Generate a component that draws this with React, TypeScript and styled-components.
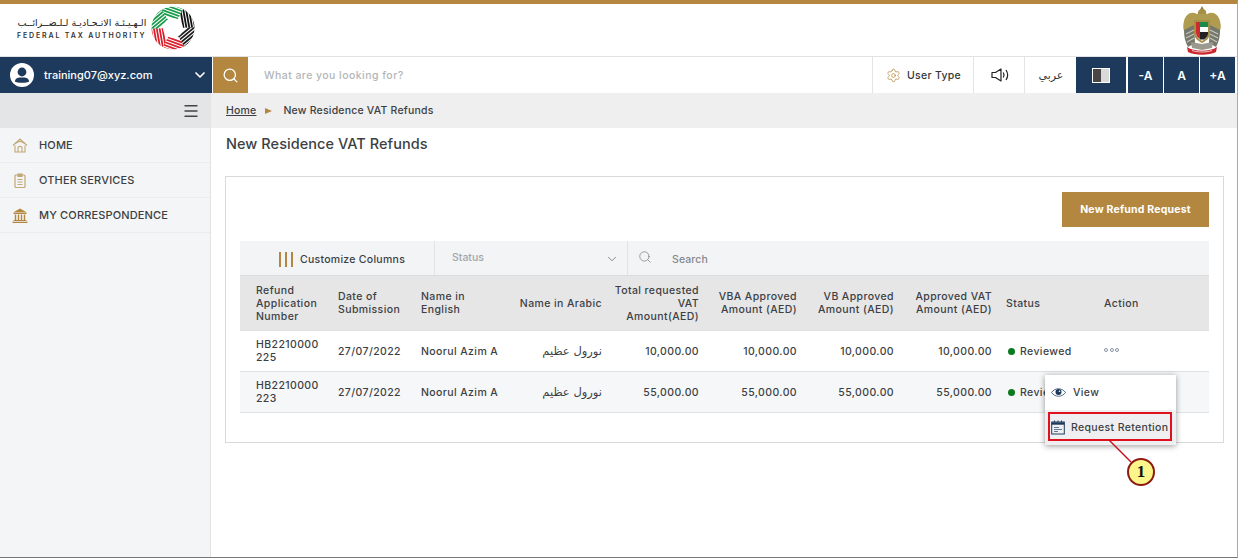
import { createGlobalStyle } from 'styled-components';
import styled from 'styled-components';
import { ChevronDown, Search, Menu, Settings } from 'lucide-react';

const GlobalStyle = createGlobalStyle`
  html, body { margin: 0; padding: 0; background: #fff; }
  body { font-family: 'Inter', 'DejaVu Sans', sans-serif; color: #3c3f44; }
  * { box-sizing: border-box; }
`;

const navy = '#1d3a5c';
const gold = '#b3873f';
const tan = '#c2a878';
const columns = '91px 83px 98px 97px 97px 98px 97px 98px 98px 1fr';

const Page = styled.div`
  position: relative;
  width: 1238px;
  height: 558px;
  overflow: hidden;
  border-bottom: 1px solid #777;
  border-right: 1px solid #aaa;
  border-top: 4px solid ${gold};
`;

const Header = styled.div`
  height: 52px;
  display: flex;
  align-items: center;
  justify-content: space-between;
  padding: 0 16px 0 17px;
`;

const Brand = styled.div`
  display: flex;
  align-items: center;
  gap: 5px;
  margin-top: -4px;
`;

const BrandText = styled.div`
  display: flex;
  flex-direction: column;
  align-items: flex-end;
  gap: 2px;
  margin-top: 1px;
`;

const BrandArabic = styled.div`
  font-family: 'DejaVu Sans', sans-serif;
  font-size: 9.5px;
  line-height: 12px;
  color: #222;
  direction: rtl;
  white-space: nowrap;
`;

const BrandLatin = styled.div`
  font-size: 7px;
  line-height: 9px;
  font-weight: 600;
  letter-spacing: 1.85px;
  color: #333;
`;

const NavBar = styled.div`
  height: 37px;
  display: flex;
  border-top: 1px solid #e2e2e2;
  padding-right: 2px;
`;

const Account = styled.div`
  width: 212px;
  background: ${navy};
  color: #fff;
  display: flex;
  align-items: center;
  padding: 0 4px 0 10px;
  font-size: 11px;
  font-weight: 500;
`;

const AccountName = styled.span`
  flex: 1;
  margin-left: 10px;
`;

const SearchButton = styled.div`
  width: 35px;
  margin-left: 1px;
  background: ${gold};
  color: #fff;
  display: flex;
  align-items: center;
  justify-content: center;
`;

const SearchHint = styled.div`
  flex: 1;
  display: flex;
  align-items: center;
  padding-left: 16px;
  font-size: 10.5px;
  font-weight: 500;
  letter-spacing: 0.45px;
  color: #b4b6b8;
`;

const NavItem = styled.div<{ $w: number }>`
  width: ${(p) => p.$w}px;
  display: flex;
  align-items: center;
  justify-content: center;
  gap: 6px;
  padding-left: 1px;
  border-left: 1px solid #e4e4e4;
  font-size: 10.5px;
  font-weight: 500;
  letter-spacing: 0.3px;
  color: #33363a;
`;

const ArabicLabel = styled.span`
  font-family: 'DejaVu Sans', sans-serif;
  font-size: 11px;
`;

const NavDark = styled.div<{ $w: number; $gap: number }>`
  width: ${(p) => p.$w}px;
  margin-right: ${(p) => p.$gap}px;
  background: ${navy};
  color: #fff;
  display: flex;
  align-items: center;
  justify-content: center;
  font-size: 12px;
  font-weight: 600;
`;

const ContrastIcon = styled.div`
  width: 18px;
  height: 15px;
  border: 1px solid #fff;
  background: linear-gradient(90deg, #4a4648 50%, #d9d9d9 50%);
`;

const Body = styled.div`
  display: flex;
  height: 464px;
`;

const Sidebar = styled.div`
  width: 211px;
  flex: none;
  background: #f4f5f6;
  border-right: 1px solid #e2e3e4;
`;

const SideTop = styled.div`
  height: 35px;
  background: #e4e5e6;
  display: flex;
  align-items: center;
  justify-content: flex-end;
  padding-right: 10px;
  color: #444;
`;

const SideItem = styled.div`
  height: 35px;
  display: flex;
  align-items: center;
  gap: 11px;
  padding-left: 12px;
  border-bottom: 1px solid #ececee;
  font-size: 11px;
  font-weight: 500;
  letter-spacing: 0.15px;
  color: #3c3f44;
  svg { flex: none; }
`;

const Main = styled.div`
  flex: 1;
  min-width: 0;
`;

const Crumbs = styled.div`
  height: 35px;
  background: #efefef;
  display: flex;
  align-items: center;
  gap: 9px;
  padding-left: 15px;
  font-size: 10.5px;
  font-weight: 500;
  letter-spacing: 0.2px;
`;

const CrumbLink = styled.span`
  text-decoration: underline;
`;

const CrumbArrow = styled.span`
  width: 0;
  height: 0;
  margin-right: 2px;
  border-left: 7px solid ${gold};
  border-top: 3.5px solid transparent;
  border-bottom: 3.5px solid transparent;
`;

const Title = styled.h1`
  margin: 0;
  padding: 7px 0 0 15px;
  height: 48px;
  font-size: 14.5px;
  line-height: 18px;
  font-weight: 500;
  letter-spacing: 0.05px;
  color: #3c3f44;
`;

const Card = styled.div`
  width: 999px;
  height: 267px;
  margin-left: 14px;
  border: 1px solid #d9d9d9;
  padding: 15px 14px 0;
`;

const CardActions = styled.div`
  display: flex;
  justify-content: flex-end;
  height: 49px;
`;

const PrimaryButton = styled.div`
  width: 147px;
  height: 35px;
  background: ${gold};
  color: #fff;
  display: flex;
  align-items: center;
  justify-content: center;
  font-size: 10.5px;
  font-weight: 700;
  letter-spacing: 0.2px;
`;

const Toolbar = styled.div`
  height: 35px;
  display: flex;
  background: #f3f4f6;
  border-bottom: 1px solid #dcdcdc;
`;

const CustomizeButton = styled.div`
  width: 195px;
  display: flex;
  align-items: center;
  justify-content: center;
  gap: 7px;
  padding: 2px 0 0 10px;
  font-size: 10.5px;
  font-weight: 500;
  letter-spacing: 0.28px;
  border-right: 1px solid #e2e3e5;
`;

const ColumnsIcon = styled.span`
  display: flex;
  gap: 4px;
  i {
    display: block;
    width: 2px;
    height: 15px;
    background: ${gold};
  }
`;

const StatusSelect = styled.div`
  width: 193px;
  display: flex;
  align-items: center;
  justify-content: space-between;
  padding: 0 8px 0 17px;
  font-size: 10.5px;
  font-weight: 500;
  color: #a2a5a9;
  border-right: 1px solid #e2e3e5;
  svg { color: #666; margin-top: 2px; }
  span { margin-top: -2px; }
`;

const SearchBox = styled.div`
  display: flex;
  align-items: center;
  gap: 20px;
  padding-left: 10px;
  font-size: 10.5px;
  font-weight: 500;
  letter-spacing: 0.1px;
  color: #85888c;
  svg { color: #777; margin-top: -3px; }
  span { margin-top: 3px; }
`;

const HeadRow = styled.div`
  display: grid;
  grid-template-columns: ${columns};
  height: 55px;
  background: #e6e6e7;
  border-bottom: 1px solid #dfe0e1;
`;

const DataRow = styled.div<{ $alt?: boolean }>`
  display: grid;
  grid-template-columns: ${columns};
  height: 41px;
  background: ${(p) => (p.$alt ? '#f6f7f8' : '#fff')};
  border-bottom: 1px solid #e0e1e3;
`;

const Cell = styled.div<{ $right?: boolean; $first?: boolean }>`
  display: flex;
  align-items: center;
  justify-content: ${(p) => (p.$right ? 'flex-end' : 'flex-start')};
  text-align: ${(p) => (p.$right ? 'right' : 'left')};
  padding: 0 7px 0 ${(p) => (p.$first ? '16px' : p.$right ? '0' : '7px')};
  font-size: 10.5px;
  line-height: 13px;
  font-weight: 500;
  letter-spacing: 0.4px;
  color: #3c3f44;
`;

const ArabicName = styled.span`
  font-family: 'DejaVu Sans', sans-serif;
  font-size: 11.5px;
  letter-spacing: 0;
  direction: rtl;
`;

const StatusDot = styled.span`
  width: 7px;
  height: 7px;
  border-radius: 50%;
  background: #0b7a1e;
  margin: 0 5px 0 2px;
  flex: none;
`;

const Dots = styled.span`
  display: flex;
  gap: 1.5px;
  margin-top: -3px;
  i {
    display: block;
    width: 4px;
    height: 4px;
    border-radius: 50%;
    border: 1px solid #8a94a6;
  }
`;

const ActionMenu = styled.div`
  position: absolute;
  left: 1045px;
  top: 371px;
  width: 131px;
  height: 70px;
  background: #fff;
  box-shadow: 0 1px 6px rgba(0, 0, 0, 0.4);
`;

const MenuItem = styled.div<{ $active?: boolean }>`
  height: 35px;
  display: flex;
  align-items: center;
  gap: ${(p) => (p.$active ? 6 : 7)}px;
  padding-left: 6px;
  background: ${(p) => (p.$active ? '#efeff1' : '#fff')};
  font-size: 10.5px;
  font-weight: 500;
  letter-spacing: 0.35px;
  white-space: nowrap;
  color: #3c3f44;
  svg { flex: none; }
`;

const Highlight = styled.div`
  position: absolute;
  left: 1048px;
  top: 408px;
  width: 124px;
  height: 29px;
  border: 2px solid #e0101f;
`;

const Leader = styled.svg`
  position: absolute;
  left: 1100px;
  top: 432px;
`;

const Badge = styled.div`
  position: absolute;
  left: 1127px;
  top: 454px;
  width: 28px;
  height: 28px;
  border-radius: 50%;
  background: #fbf58a;
  border: 2px solid #8c1c13;
  color: #111;
  display: flex;
  align-items: center;
  justify-content: center;
  font-family: 'Liberation Serif', serif;
  font-size: 17px;
  font-weight: 700;
`;

const FtaMark = () => {
  const bands = [
    { rot: 0, color: '#1a9a4b' },
    { rot: 60, color: '#111' },
    { rot: 120, color: '#1c1c1c' },
    { rot: 180, color: '#d9202c' },
    { rot: 240, color: '#d9202c' },
    { rot: 300, color: '#1a9a4b' },
  ];
  return (
    <svg width="44" height="44" viewBox="-22 -22 44 44">
      <defs>
        <clipPath id="fta-wedge">
          <path d="M0 0 L-15 -24 L13 -24z" />
        </clipPath>
        <clipPath id="fta-ring">
          <circle r="21.5" />
        </clipPath>
      </defs>
      <g clipPath="url(#fta-ring)">
        {bands.map((b) => (
          <g key={b.rot} transform={`rotate(${b.rot})`}>
            <g clipPath="url(#fta-wedge)" stroke={b.color} strokeWidth="1.8" fill="none">
              <path d="M-16 -17 L14 -6" />
              <path d="M-16 -20 L14 -9" />
              <path d="M-16 -23 L14 -12" />
              <path d="M-16 -26 L14 -15" />
              <path d="M-16 -29 L14 -18" />
              <path d="M-16 -32 L14 -21" />
            </g>
          </g>
        ))}
      </g>
      <circle r="10" fill="#fff" />
    </svg>
  );
};

const Emblem = () => (
  <svg width="38" height="49" viewBox="0 0 38 49">
    <path d="M19 0 l2 4 -4 0z" fill="#8a7a3c" />
    <path d="M15 9 C14 5 17 3 19 3 C22 3 24 5 23 9z" fill="#a58f45" />
    <path d="M14 8 C8 5 3 8 1 15 C0 19 0 22 1 25 L12 20 L19 14 L26 20 L37 25 C38 22 38 19 37 15 C35 8 30 5 24 8z" fill="#b09c50" />
    <path d="M1 24 L11 19 L12 37 L5 41 C2 36 1 30 1 24z" fill="#75786c" />
    <path d="M37 24 L27 19 L26 37 L33 41 C36 36 37 30 37 24z" fill="#75786c" />
    <path d="M3 28 L11 24 M3 32 L11 28 M4 36 L11 32 M35 28 L27 24 M35 32 L27 28 M34 36 L27 32" stroke="#c9c9bc" strokeWidth="1.1" />
    <path d="M11 14 h16 v13 c0 5 -4 8 -8 10 c-4 -2 -8 -5 -8 -10z" fill="#a58f45" />
    <path d="M13 16 h12 v11 c0 4 -3 6 -6 8 c-3 -2 -6 -4 -6 -8z" fill="#fff" />
    <path d="M13 16 h4 v17 c-2 -1 -4 -3 -4 -6z" fill="#cf2a2e" />
    <path d="M17 16 h8 v5 h-8z" fill="#1a8a4b" />
    <path d="M17 26 h8 v2 c0 2 -2 4 -4 5.5 h-4z" fill="#222" />
    <path d="M8 36 L19 38 L30 36 L29 42 L19 44 L9 42z" fill="#9a9a8e" />
    <path d="M4 41 C11 46 27 46 34 41 L33 46 C26 49.5 12 49.5 5 46z" fill="#c9262e" />
    <path d="M9 44.5 C15 46.5 23 46.5 29 44.5" stroke="#f0d8d0" strokeWidth="0.9" fill="none" />
  </svg>
);

const AccountIcon = () => (
  <svg width="24" height="24" viewBox="0 0 24 24">
    <circle cx="12" cy="12" r="12" fill="#fff" />
    <circle cx="12" cy="9" r="4.4" fill={navy} />
    <path d="M4.8 18.5 C5.5 14.8 8.5 14.5 12 14.5 C15.5 14.5 18.5 14.8 19.2 18.5 C17 20.2 7 20.2 4.8 18.5z" fill={navy} />
  </svg>
);

const SpeakerIcon = () => (
  <svg width="18" height="14" viewBox="0 0 18 14" fill="none" stroke="#222" strokeWidth="1.2">
    <path d="M1 4.5 H4.5 L10 1 V13 L4.5 9.5 H1z" strokeLinejoin="round" />
    <path d="M12.3 4.5 C13.2 6 13.2 8 12.3 9.5" />
    <path d="M15 2 C17 5 17 9 15 12" />
  </svg>
);

const HomeIcon = () => (
  <svg width="16" height="15" viewBox="0 0 16 15" fill="none" stroke={tan} strokeWidth="1.1">
    <path d="M1 7.5 L8 1 L15 7.5" />
    <path d="M3 5.5 L8 3.2 L13 5.5" />
    <path d="M3 7.5 V14 H13 V7.5" />
    <path d="M6 14 V9.5 C6 8 10 8 10 9.5 V14" />
  </svg>
);

const ClipboardIcon = () => (
  <svg width="16" height="15" viewBox="0 0 16 15" fill="none" stroke={tan} strokeWidth="1.2">
    <rect x="3" y="2" width="10" height="12.5" rx="1" />
    <path d="M6 1 H10 V3.5 H6z" fill={tan} />
    <path d="M5.5 6.5 H10.5 M5.5 9 H10.5 M5.5 11.5 H10.5" />
  </svg>
);

const BankIcon = () => (
  <svg width="16" height="15" viewBox="0 0 16 15" fill="none">
    <path d="M8 0.5 L15 4.5 H1z" fill={gold} />
    <path d="M1.5 5.5 H14.5" stroke={gold} strokeWidth="1" />
    <path d="M3.5 6.5 V12 M6.5 6.5 V12 M9.5 6.5 V12 M12.5 6.5 V12" stroke={gold} strokeWidth="1.4" />
    <path d="M1.5 12.5 H14.5 M0.5 14.3 H15.5" stroke={gold} strokeWidth="1.2" />
  </svg>
);

const EyeIcon = () => (
  <svg width="15" height="11" viewBox="0 0 15 11" fill="none">
    <path d="M0.5 5.5 C4 0.5 11 0.5 14.5 5.5 C11 10.5 4 10.5 0.5 5.5z" stroke="#4d6a88" strokeWidth="1" />
    <circle cx="7.5" cy="5" r="3" fill={navy} />
    <circle cx="8.5" cy="4.2" r="0.8" fill="#fff" />
  </svg>
);

const RetentionIcon = () => (
  <svg width="14" height="15" viewBox="0 0 14 15" fill="none" stroke={navy}>
    <rect x="0.7" y="2" width="12.6" height="12" strokeWidth="1" />
    <path d="M0.7 3.5 H13.3" strokeWidth="2.4" />
    <path d="M3.5 0.5 V2 M7 0.5 V2 M10.5 0.5 V2" strokeWidth="1" />
    <path d="M3 7.5 H8 M3 9.5 H11 M3 11.5 H7" strokeWidth="0.9" stroke="#4d6a88" />
  </svg>
);

const headers = [
  'Refund Application Number',
  'Date of Submission',
  'Name in English',
  'Name in Arabic',
  'Total requested VAT Amount(AED)',
  'VBA Approved Amount (AED)',
  'VB Approved Amount (AED)',
  'Approved VAT Amount (AED)',
  'Status',
  'Action',
];

const rows = [
  { id: 'HB2210000 225', amount: '10,000.00', alt: false },
  { id: 'HB2210000 223', amount: '55,000.00', alt: true },
];

const App = () => (
  <Page>
    <GlobalStyle />
    <Header>
      <Brand>
        <BrandText>
          <BrandArabic>الـهـيـئـة الاتـحـاديـة لـلـضــرائــب</BrandArabic>
          <BrandLatin>FEDERAL TAX AUTHORITY</BrandLatin>
        </BrandText>
        <FtaMark />
      </Brand>
      <Emblem />
    </Header>
    <NavBar>
      <Account>
        <AccountIcon />
        <AccountName>training07@xyz.com</AccountName>
        <ChevronDown size={16} strokeWidth={2.5} />
      </Account>
      <SearchButton>
        <Search size={17} strokeWidth={1.8} />
      </SearchButton>
      <SearchHint>What are you looking for?</SearchHint>
      <NavItem $w={101}>
        <Settings size={15} strokeWidth={1.2} color={gold} />
        User Type
      </NavItem>
      <NavItem $w={51}>
        <SpeakerIcon />
      </NavItem>
      <NavItem $w={52}>
        <ArabicLabel>عربي</ArabicLabel>
      </NavItem>
      <NavDark $w={50} $gap={2}>
        <ContrastIcon />
      </NavDark>
      <NavDark $w={35} $gap={1}>-A</NavDark>
      <NavDark $w={35} $gap={1}>A</NavDark>
      <NavDark $w={35} $gap={0}>+A</NavDark>
    </NavBar>
    <Body>
      <Sidebar>
        <SideTop>
          <Menu size={18} strokeWidth={1.8} />
        </SideTop>
        <SideItem>
          <HomeIcon />
          HOME
        </SideItem>
        <SideItem>
          <ClipboardIcon />
          OTHER SERVICES
        </SideItem>
        <SideItem>
          <BankIcon />
          MY CORRESPONDENCE
        </SideItem>
      </Sidebar>
      <Main>
        <Crumbs>
          <CrumbLink>Home</CrumbLink>
          <CrumbArrow />
          <span>New Residence VAT Refunds</span>
        </Crumbs>
        <Title>New Residence VAT Refunds</Title>
        <Card>
          <CardActions>
            <PrimaryButton>New Refund Request</PrimaryButton>
          </CardActions>
          <Toolbar>
            <CustomizeButton>
              <ColumnsIcon>
                <i />
                <i />
                <i />
              </ColumnsIcon>
              Customize Columns
            </CustomizeButton>
            <StatusSelect>
              <span>Status</span>
              <ChevronDown size={14} strokeWidth={1.3} />
            </StatusSelect>
            <SearchBox>
              <Search size={14} strokeWidth={1.2} />
              <span>Search</span>
            </SearchBox>
          </Toolbar>
          <HeadRow>
            {headers.map((h, i) => (
              <Cell key={h} $first={i === 0} $right={i >= 3 && i <= 7}>
                {h}
              </Cell>
            ))}
          </HeadRow>
          {rows.map((r) => (
            <DataRow key={r.id} $alt={r.alt}>
              <Cell $first>{r.id}</Cell>
              <Cell>27/07/2022</Cell>
              <Cell>Noorul Azim A</Cell>
              <Cell $right>
                <ArabicName>نورول عظيم</ArabicName>
              </Cell>
              <Cell $right>{r.amount}</Cell>
              <Cell $right>{r.amount}</Cell>
              <Cell $right>{r.amount}</Cell>
              <Cell $right>{r.amount}</Cell>
              <Cell>
                <StatusDot />
                Reviewed
              </Cell>
              <Cell>
                {!r.alt && (
                  <Dots>
                    <i />
                    <i />
                    <i />
                  </Dots>
                )}
              </Cell>
            </DataRow>
          ))}
        </Card>
      </Main>
    </Body>
    <ActionMenu>
      <MenuItem>
        <EyeIcon />
        View
      </MenuItem>
      <MenuItem $active>
        <RetentionIcon />
        Request Retention
      </MenuItem>
    </ActionMenu>
    <Highlight />
    <Leader width="50" height="30" viewBox="0 0 50 30">
      <path d="M9 4 L31 26" stroke="#c5101c" strokeWidth="1.5" />
    </Leader>
    <Badge>1</Badge>
  </Page>
);

export default App;
